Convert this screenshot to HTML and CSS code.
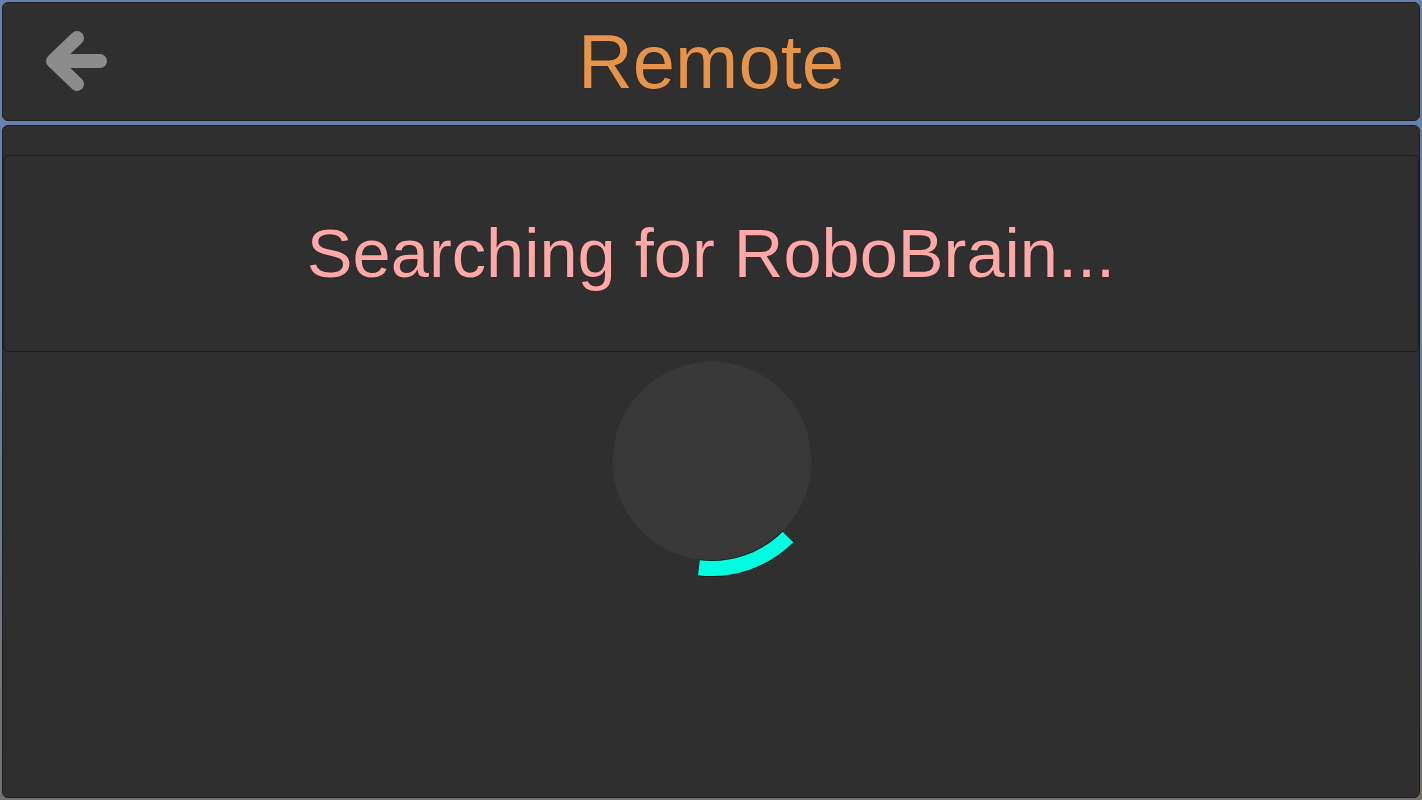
FILE: index.html
```html
<!DOCTYPE html>
<html>
<head>
<meta charset="utf-8">
<link rel="stylesheet" href="styles.css">
</head>
<body>
<header class="topbar">
  <div class="back">
    <svg class="back-icon" width="64" height="64" viewBox="0 0 64 64">
      <path d="M34 8 L10 31 L34 54 M12 31 L57 31" fill="none" stroke="#8c8c8c" stroke-width="14" stroke-linejoin="round" stroke-linecap="round"/>
    </svg>
  </div>
  <h1 class="title">Remote</h1>
  <div></div>
</header>
<main class="panel">
  <section class="status">
    <p class="status-text">Searching for RoboBrain...</p>
  </section>
  <div class="spinner-wrap">
    <svg class="spinner" width="200" height="200" viewBox="0 0 200 200">
      <circle cx="100" cy="100" r="99.5" fill="#383838"/>
      <path d="M176 176 A107.5 107.5 0 0 1 86.9 206.7" fill="none" stroke="#1a1a1a" stroke-width="16.5"/>
      <path d="M176 176 A107.5 107.5 0 0 1 86.9 206.7" fill="none" stroke="#00ffe0" stroke-width="15"/>
    </svg>
  </div>
</main>
</body>
</html>
```

FILE: styles.css
```css
html, body {
  margin: 0;
  padding: 0;
}
body {
  width: 1422px;
  height: 800px;
  box-sizing: border-box;
  padding: 2px 2px 2px 2px;
  background: linear-gradient(180deg, #6582b0 0%, #6b84a8 40%, #76716c 100%);
  display: flex;
  flex-direction: column;
  gap: 4px;
  font-family: "Liberation Sans", Arial, sans-serif;
  overflow: hidden;
}
.topbar {
  height: 119px;
  box-sizing: border-box;
  background: #2f2f2f;
  border: 1px solid #1d1d1d;
  border-radius: 6px;
  display: grid;
  grid-template-columns: 1fr auto 1fr;
  align-items: center;
}
.back {
  padding-left: 40px;
  display: flex;
  align-items: center;
}
.back-icon {
  display: block;
}
.title {
  margin: 0;
  font-weight: normal;
  font-size: 76px;
  line-height: 76px;
  color: #e6944c;
  text-shadow: 0 0 1px #111;
  margin-top: 1px;
}
.panel {
  flex: 1;
  box-sizing: border-box;
  background: #2f2f2f;
  border: 1px solid #1d1d1d;
  border-radius: 6px;
  display: flex;
  flex-direction: column;
  align-items: center;
}
.status {
  align-self: stretch;
  margin-top: 29px;
  height: 197px;
  box-sizing: border-box;
  border: 1px solid #1e1e1e;
  border-radius: 5px;
  display: flex;
  align-items: center;
  justify-content: center;
}
.status-text {
  margin: 0;
  font-size: 68.6px;
  line-height: 69px;
  color: #ffa8a8;
  text-shadow: 0 0 1px #111;
}
.spinner-wrap {
  margin-top: 9px;
  display: flex;
  justify-content: center;
}
.spinner {
  display: block;
  overflow: visible;
  margin-left: 1px;
}
```
